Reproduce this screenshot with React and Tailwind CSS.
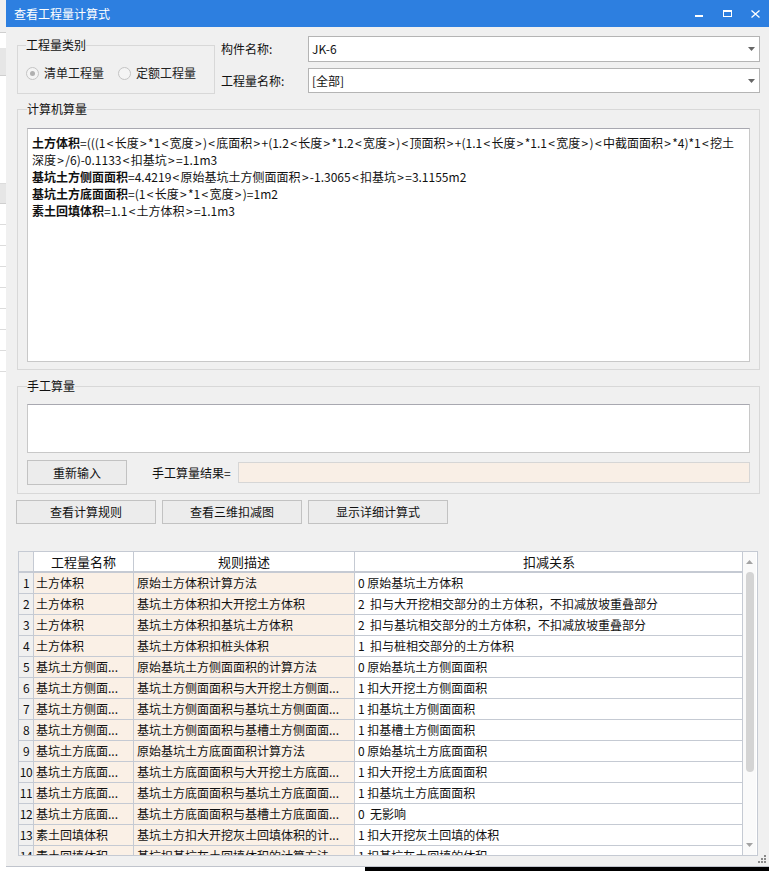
import React from "react";

const rows = [
  ["1", "土方体积", "原始土方体积计算方法", "0 原始基坑土方体积"],
  ["2", "土方体积", "基坑土方体积扣大开挖土方体积", "2  扣与大开挖相交部分的土方体积，不扣减放坡重叠部分"],
  ["3", "土方体积", "基坑土方体积扣基坑土方体积", "2  扣与基坑相交部分的土方体积，不扣减放坡重叠部分"],
  ["4", "土方体积", "基坑土方体积扣桩头体积", "1  扣与桩相交部分的土方体积"],
  ["5", "基坑土方侧面...", "原始基坑土方侧面面积的计算方法", "0 原始基坑土方侧面面积"],
  ["6", "基坑土方侧面...", "基坑土方侧面面积与大开挖土方侧面...", "1 扣大开挖土方侧面面积"],
  ["7", "基坑土方侧面...", "基坑土方侧面面积与基坑土方侧面面...", "1 扣基坑土方侧面面积"],
  ["8", "基坑土方侧面...", "基坑土方侧面面积与基槽土方侧面面...", "1 扣基槽土方侧面面积"],
  ["9", "基坑土方底面...", "原始基坑土方底面面积计算方法", "0 原始基坑土方底面面积"],
  ["10", "基坑土方底面...", "基坑土方底面面积与大开挖土方底面...", "1 扣大开挖土方底面面积"],
  ["11", "基坑土方底面...", "基坑土方底面面积与基坑土方底面面...", "1 扣基坑土方底面面积"],
  ["12", "基坑土方底面...", "基坑土方底面面积与基槽土方底面面...", "0  无影响"],
  ["13", "素土回填体积", "基坑土方扣大开挖灰土回填体积的计...", "1 扣大开挖灰土回填的体积"],
  ["14", "素土回填体积", "基坑扣基坑灰土回填体积的计算方法", "1 扣基坑灰土回填的体积"],
];

// angle brackets in the formula get a bit of air, like the original font
function fmt(str) {
  return str.split(/([<>])/).map((part, i) =>
    part === "<" || part === ">" ? (
      <span key={i} className="mx-[1.3px]">
        {part}
      </span>
    ) : (
      part
    )
  );
}

function Radio({ checked, label }) {
  return (
    <div className="flex items-center">
      <span className="w-[13px] h-[13px] rounded-full border border-[#c4c4c4] bg-[#f4f4f4] flex items-center justify-center">
        {checked && <span className="w-[5px] h-[5px] rounded-full bg-[#b0b0b0]" />}
      </span>
      <span className="ml-[5px]">{label}</span>
    </div>
  );
}

function DownTri({ color = "#555" }) {
  return (
    <svg width="7" height="4" viewBox="0 0 7 4">
      <path d="M0 0H7L3.5 4Z" fill={color} />
    </svg>
  );
}

function Combo({ value, h }) {
  return (
    <div
      className={`w-[452px] bg-white border border-[#b4b4b4] flex items-center pl-[3px] pr-[4px] ${h}`}
    >
      <span className="flex-1">{value}</span>
      <DownTri color="#666" />
    </div>
  );
}

function Btn({ children, className = "" }) {
  return (
    <button
      className={`bg-[#ececec] border border-[#c2c2c2] flex items-center justify-center text-[12px] ${className}`}
    >
      {children}
    </button>
  );
}

export default function App() {
  return (
    <div className="w-[769px] h-[871px] overflow-hidden flex flex-col font-['Noto_Sans_CJK_SC','Noto_Sans',sans-serif] text-[12px] leading-[14px] text-[#111]">
      <div className="flex h-[867px]">
        {/* app behind the dialog */}
        <div className="w-[6px] bg-white flex flex-col">
          <div className="h-[33px] bg-[#f0f0f0] border-b border-[#cfcfcf]" />
          <div className="h-[15px]" />
          <div className="h-[28px] bg-[#e6e6e6] border-b border-[#cfcfcf]" />
          <div className="h-[108px] border-b border-[#dcdcdc]" />
          <div className="h-[20px] bg-[#e6e6e6] border-b border-[#cfcfcf]" />
          <div className="h-[21px] border-b border-[#dcdcdc]" />
          <div className="h-[21px] border-b border-[#dcdcdc]" />
          <div className="h-[21px] border-b border-[#dcdcdc]" />
          <div className="h-[21px] border-b border-[#dcdcdc]" />
          <div className="h-[21px] border-b border-[#dcdcdc]" />
          <div className="h-[21px] border-b border-[#dcdcdc]" />
          <div className="h-[21px] border-b border-[#dcdcdc]" />
          <div className="h-[21px] border-b border-[#dcdcdc]" />
          <div className="flex-1" />
        </div>

        {/* dialog */}
        <div className="flex-1 flex flex-col">
          <div className="h-[27px] bg-[#2d7fe0] flex items-center pl-[8px] text-white">
            <span>查看工程量计算式</span>
            <div className="ml-auto flex h-full">
              <div className="w-[28px] flex items-center justify-center">
                <div className="w-[8px] h-[2px] bg-white mt-[5px]" />
              </div>
              <div className="w-[28px] flex items-center justify-center">
                <div className="w-[9px] h-[7px] border border-white border-t-2" />
              </div>
              <div className="w-[28px] flex items-center justify-center">
                <svg width="9" height="8" viewBox="0 0 9 8">
                  <path d="M0.5 0.5L8.5 7.5M8.5 0.5L0.5 7.5" stroke="#fff" strokeWidth="1.3" />
                </svg>
              </div>
            </div>
          </div>

          <div className="flex-1 bg-[#f0f0f0] pl-[11px] relative border-b border-[#c0c4cc]">
            {/* top row */}
            <div className="flex mt-[9px]">
              <fieldset className="mt-[2px] w-[198px] h-[56px] border border-[#d8d8d8] pl-[8px]">
                <legend className="leading-[14px]">工程量类别</legend>
                <div className="flex gap-[14px] mt-[14px] text-[#222]">
                  <Radio checked label="清单工程量" />
                  <Radio label="定额工程量" />
                </div>
              </fieldset>
              <div className="flex flex-col gap-[6px] ml-[6px]">
                <div className="flex items-center">
                  <span className="w-[87px]">构件名称:</span>
                  <Combo value="JK-6" h="h-[26px]" />
                </div>
                <div className="flex items-center">
                  <span className="w-[87px]">工程量名称:</span>
                  <Combo value="[全部]" h="h-[25px]" />
                </div>
              </div>
            </div>

            {/* 计算机算量 */}
            <fieldset className="mt-[8px] w-[743px] border border-[#d8d8d8] px-[9px] pb-[7px]">
              <legend className="leading-[14px]">计算机算量</legend>
              <div className="mt-[12px] h-[234px] bg-white border border-[#c8c8c8] border-t-[#a8a8b0] pl-[4px] pt-[5px] leading-[17px] whitespace-nowrap">
                <div>
                  <b>土方体积</b>
                  {fmt("=(((1<长度>*1<宽度>)<底面积>+(1.2<长度>*1.2<宽度>)<顶面积>+(1.1<长度>*1.1<宽度>)<中截面面积>*4)*1<挖土")}
                </div>
                <div>{fmt("深度>/6)-0.1133<扣基坑>=1.1m3")}</div>
                <div>
                  <b>基坑土方侧面面积</b>
                  {fmt("=4.4219<原始基坑土方侧面面积>-1.3065<扣基坑>=3.1155m2")}
                </div>
                <div>
                  <b>基坑土方底面面积</b>
                  {fmt("=(1<长度>*1<宽度>)=1m2")}
                </div>
                <div>
                  <b>素土回填体积</b>
                  {fmt("=1.1<土方体积>=1.1m3")}
                </div>
              </div>
            </fieldset>

            {/* 手工算量 */}
            <fieldset className="mt-[9px] w-[743px] border border-[#d8d8d8] px-[9px] pb-[8px]">
              <legend className="leading-[14px]">手工算量</legend>
              <div className="mt-[11px] h-[49px] bg-white border border-[#c8c8c8] border-t-[#a8a8b0]" />
              <div className="flex items-center mt-[7px]">
                <Btn className="w-[100px] h-[25px]">重新输入</Btn>
                <span className="ml-[25px]">手工算量结果=</span>
                <div className="ml-auto w-[512px] h-[21px] bg-[#f9efe6] border border-[#d6d6d6]" />
              </div>
            </fieldset>

            {/* buttons */}
            <div className="flex gap-[6px] mt-[6px] -ml-[1px]">
              <Btn className="w-[140px] h-[24px]">查看计算规则</Btn>
              <Btn className="w-[140px] h-[24px]">查看三维扣减图</Btn>
              <Btn className="w-[140px] h-[24px]">显示详细计算式</Btn>
            </div>

            {/* table */}
            <div className="mt-[27px] ml-[1px] w-[740px] h-[305px] border border-[#c5cad3] flex bg-white">
              <div className="w-[724px] overflow-hidden border-r border-[#c5cad3]">
                <div className="grid grid-cols-[14px_99px_220px_388px] auto-rows-[20px] gap-px bg-[#c5cad3]">
                  <div className="h-[19px] bg-[#f0f0f0]" />
                  <div className="h-[19px] bg-white flex items-center justify-center text-[13px]">工程量名称</div>
                  <div className="h-[19px] bg-white flex items-center justify-center text-[13px]">规则描述</div>
                  <div className="h-[19px] bg-white flex items-center justify-center text-[13px]">扣减关系</div>
                  {rows.map((r) => (
                    <React.Fragment key={r[0]}>
                      <div className="bg-[#f0f0f0] flex items-center justify-center text-[12px] tracking-[-0.5px]">{r[0]}</div>
                      <div className="bg-[#faf0e6] flex items-center pl-[2px] whitespace-nowrap overflow-hidden">{r[1]}</div>
                      <div className="bg-[#faf0e6] flex items-center pl-[3px] whitespace-nowrap overflow-hidden">{r[2]}</div>
                      <div className="bg-white flex items-center pl-[3px] whitespace-pre overflow-hidden">{r[3]}</div>
                    </React.Fragment>
                  ))}
                </div>
              </div>
              <div className="w-[13px] bg-[#fafafa] flex flex-col items-center">
                <div className="h-[20px] flex items-center justify-center">
                  <svg width="7" height="4" viewBox="0 0 7 4">
                    <path d="M0 4H7L3.5 0Z" fill="#a3a3a3" />
                  </svg>
                </div>
                <div className="w-[8px] h-[200px] rounded-full bg-[#d4d4d4]" />
                <div className="flex-1" />
                <div className="h-[20px] flex items-center justify-center">
                  <DownTri color="#a3a3a3" />
                </div>
              </div>
            </div>

            {/* resize grip */}
            <div className="absolute right-[3px] bottom-[3px] grid grid-cols-3 gap-[1px]">
              <span className="w-[2px] h-[2px]" />
              <span className="w-[2px] h-[2px]" />
              <span className="w-[2px] h-[2px] bg-[#8a8a8a]" />
              <span className="w-[2px] h-[2px]" />
              <span className="w-[2px] h-[2px] bg-[#8a8a8a]" />
              <span className="w-[2px] h-[2px] bg-[#8a8a8a]" />
              <span className="w-[2px] h-[2px] bg-[#8a8a8a]" />
              <span className="w-[2px] h-[2px] bg-[#8a8a8a]" />
              <span className="w-[2px] h-[2px] bg-[#8a8a8a]" />
            </div>
          </div>
        </div>
      </div>
      <div className="flex h-[4px]">
        <div className="w-[365px] bg-white" />
        <div className="flex-1 bg-black" />
      </div>
    </div>
  );
}
